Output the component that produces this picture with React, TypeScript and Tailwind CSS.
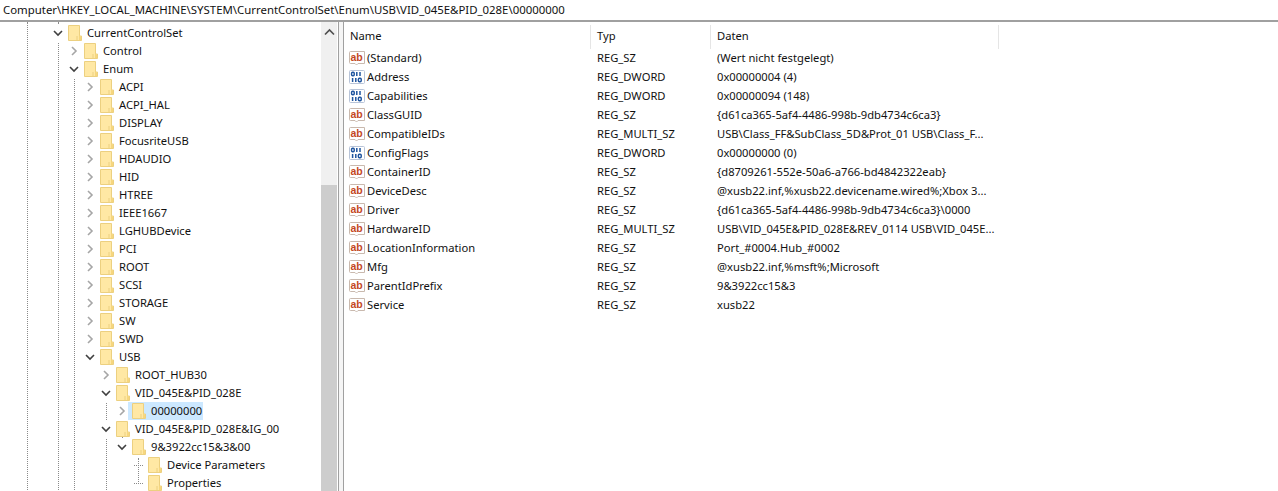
const FONT = "font-['Noto_Sans','Open_Sans',sans-serif]";

type Node = { label: string; depth: number; chev: "open" | "closed" | "none"; selected?: boolean; connector?: boolean };

const tree: Node[] = [
  { label: "CurrentControlSet", depth: 0, chev: "open" },
  { label: "Control", depth: 1, chev: "closed" },
  { label: "Enum", depth: 1, chev: "open" },
  ...["ACPI", "ACPI_HAL", "DISPLAY", "FocusriteUSB", "HDAUDIO", "HID", "HTREE", "IEEE1667", "LGHUBDevice", "PCI", "ROOT", "SCSI", "STORAGE", "SW", "SWD"].map(
    (label): Node => ({ label, depth: 2, chev: "closed" })
  ),
  { label: "USB", depth: 2, chev: "open" },
  { label: "ROOT_HUB30", depth: 3, chev: "closed" },
  { label: "VID_045E&PID_028E", depth: 3, chev: "open" },
  { label: "00000000", depth: 4, chev: "closed", selected: true },
  { label: "VID_045E&PID_028E&IG_00", depth: 3, chev: "open" },
  { label: "9&3922cc15&3&00", depth: 4, chev: "open" },
  { label: "Device Parameters", depth: 5, chev: "none", connector: true },
  { label: "Properties", depth: 5, chev: "none", connector: true },
];

const rows: [string, string, string][] = [
  ["(Standard)", "REG_SZ", "(Wert nicht festgelegt)"],
  ["Address", "REG_DWORD", "0x00000004 (4)"],
  ["Capabilities", "REG_DWORD", "0x00000094 (148)"],
  ["ClassGUID", "REG_SZ", "{d61ca365-5af4-4486-998b-9db4734c6ca3}"],
  ["CompatibleIDs", "REG_MULTI_SZ", "USB\\Class_FF&SubClass_5D&Prot_01 USB\\Class_F..."],
  ["ConfigFlags", "REG_DWORD", "0x00000000 (0)"],
  ["ContainerID", "REG_SZ", "{d8709261-552e-50a6-a766-bd4842322eab}"],
  ["DeviceDesc", "REG_SZ", "@xusb22.inf,%xusb22.devicename.wired%;Xbox 3..."],
  ["Driver", "REG_SZ", "{d61ca365-5af4-4486-998b-9db4734c6ca3}\\0000"],
  ["HardwareID", "REG_MULTI_SZ", "USB\\VID_045E&PID_028E&REV_0114 USB\\VID_045E..."],
  ["LocationInformation", "REG_SZ", "Port_#0004.Hub_#0002"],
  ["Mfg", "REG_SZ", "@xusb22.inf,%msft%;Microsoft"],
  ["ParentIdPrefix", "REG_SZ", "9&3922cc15&3"],
  ["Service", "REG_SZ", "xusb22"],
];

function Folder() {
  return (
    <svg width="14" height="16" viewBox="0 0 14 16" className="shrink-0 block">
      <path d="M0.5 0.5 H11.5 V11 H13.5 V15.5 H0.5 Z" fill="#ffe9a6" stroke="#ecd080" />
      <path d="M1 1 H11 V15 H1 Z" fill="#ffe8a4" />
      <path d="M11 10.5 V15 H13 V11.5 H12 V10.5 Z" fill="#f6d67e" />
      <path d="M9 11 V15" stroke="#ecd080" strokeWidth="1" />
    </svg>
  );
}

function Chevron({ kind }: { kind: "open" | "closed" }) {
  return kind === "open" ? (
    <svg width="10" height="10" viewBox="0 0 10 10" className="block">
      <path d="M1 3 L5 7 L9 3" fill="none" stroke="#404040" strokeWidth="1.6" />
    </svg>
  ) : (
    <svg width="10" height="10" viewBox="0 0 10 10" className="block">
      <path d="M3 1 L7 5 L3 9" fill="none" stroke="#a6a6a6" strokeWidth="1.6" />
    </svg>
  );
}

function ValueIcon({ str }: { str: boolean }) {
  return str ? (
    <svg width="16" height="16" viewBox="0 0 16 16" className="shrink-0 block">
      <path d="M0.5 2.5 Q0.5 1.5 1.5 1.5 H15.5 V13.5 H9 L7.5 15 L6 13.5 H1.5 Q0.5 13.5 0.5 12.5 Z" fill="#fff" stroke="#c9b9ae" />
      <text x="1.6" y="11" fontSize="10.5" fontWeight="700" fill="#c4481f" fontFamily="Liberation Sans, sans-serif" textLength="12">ab</text>
    </svg>
  ) : (
    <svg width="16" height="16" viewBox="0 0 16 16" className="shrink-0 block">
      <rect x="0.5" y="1.5" width="15" height="13" rx="1" fill="#fff" stroke="#b8c4d8" />
      <g fill="none" stroke="#1f559f" strokeWidth="1.5">
        <rect x="2.6" y="3.2" width="2.6" height="3.6" rx="1" />
        <path d="M7.8 3 V7 M11 3 V7" />
        <path d="M3.6 9 V13 M6.8 9 V13" />
        <rect x="9.4" y="9.2" width="2.8" height="3.6" rx="1" />
      </g>
    </svg>
  );
}

function VGuide({ left, top, height }: { left: number; top: number; height: number }) {
  return <div className="absolute w-px border-l border-dotted border-[#8a8a8a]" style={{ left, top, height }} />;
}

export default function App() {
  return (
    <div className={`${FONT} w-[1278px] h-[491px] overflow-hidden bg-white text-[11.2px] text-[#111] flex flex-col`}>
      <div className="h-[22px] shrink-0 border-b-2 border-[#a0a0a0] pl-[3px] flex items-center whitespace-nowrap text-[11.4px] leading-none">
        Computer\HKEY_LOCAL_MACHINE\SYSTEM\CurrentControlSet\Enum\USB\VID_045E&amp;PID_028E\00000000
      </div>
      <div className="flex flex-1 min-h-0">
        <div className="relative w-[321px] shrink-0 overflow-hidden pt-[2px]">
          <VGuide left={27} top={0} height={470} />
          <VGuide left={58} top={0} height={470} />
          <VGuide left={74} top={46} height={424} />
          <VGuide left={106} top={360} height={110} />
          <VGuide left={122} top={415} height={8} />
          <VGuide left={138} top={436} height={26} />
          {tree.map((n) => (
            <div key={n.label} className="relative h-[18px] flex items-center whitespace-nowrap" style={{ paddingLeft: 52 + n.depth * 16 }}>
              {n.selected && <div className="absolute left-[128px] top-0 w-[75px] h-[18px] bg-[#cce8ff]" />}
              {n.connector ? (
                <div className="relative w-[12px] h-[18px] shrink-0 flex items-center">
                  <div className="w-[9px] ml-[2px] border-t border-dotted border-[#8a8a8a]" />
                </div>
              ) : (
                <div className="relative w-[12px] h-[18px] shrink-0 flex items-center justify-center bg-white">
                  {n.chev !== "none" && <Chevron kind={n.chev} />}
                </div>
              )}
              <div className={n.selected ? "relative ml-[4px]" : "relative ml-[4px] bg-white"}>
                <Folder />
              </div>
              <span className="relative ml-[5px]">{n.label}</span>
            </div>
          ))}
        </div>
        <div className="w-[16px] shrink-0 bg-[#f0f0f0] flex flex-col">
          <div className="h-[163px] shrink-0 flex justify-center pt-[6px]">
            <svg width="11" height="8" viewBox="0 0 11 8">
              <path d="M1 6.5 L5.5 2 L10 6.5" fill="none" stroke="#505050" strokeWidth="1.7" />
            </svg>
          </div>
          <div className="flex-1 bg-[#cdcdcd]" />
        </div>
        <div className="w-px shrink-0 bg-white" />
        <div className="w-[6px] shrink-0 border-x border-[#a0a0a0] bg-[#f5f5f5]" />
        <div className="flex-1 min-w-0">
          <div className="h-[27px] pt-[2px] flex items-center">
            <div className="w-[247px] h-[24px] pl-[6px] flex items-center border-r border-[#e5e5e5]">Name</div>
            <div className="w-[120px] h-[24px] pl-[6px] flex items-center border-r border-[#e5e5e5]">Typ</div>
            <div className="w-[288px] h-[24px] pl-[6px] flex items-center border-r border-[#e5e5e5]">Daten</div>
          </div>
          {rows.map(([name, type, data]) => (
            <div key={name} className="h-[19px] flex items-center whitespace-nowrap">
              <div className="w-[247px] pl-[5px] flex items-center gap-[2px]">
                <ValueIcon str={type !== "REG_DWORD"} />
                <span>{name}</span>
              </div>
              <div className="w-[120px] pl-[6px]">{type}</div>
              <div className="pl-[6px]">{data}</div>
            </div>
          ))}
        </div>
      </div>
    </div>
  );
}
